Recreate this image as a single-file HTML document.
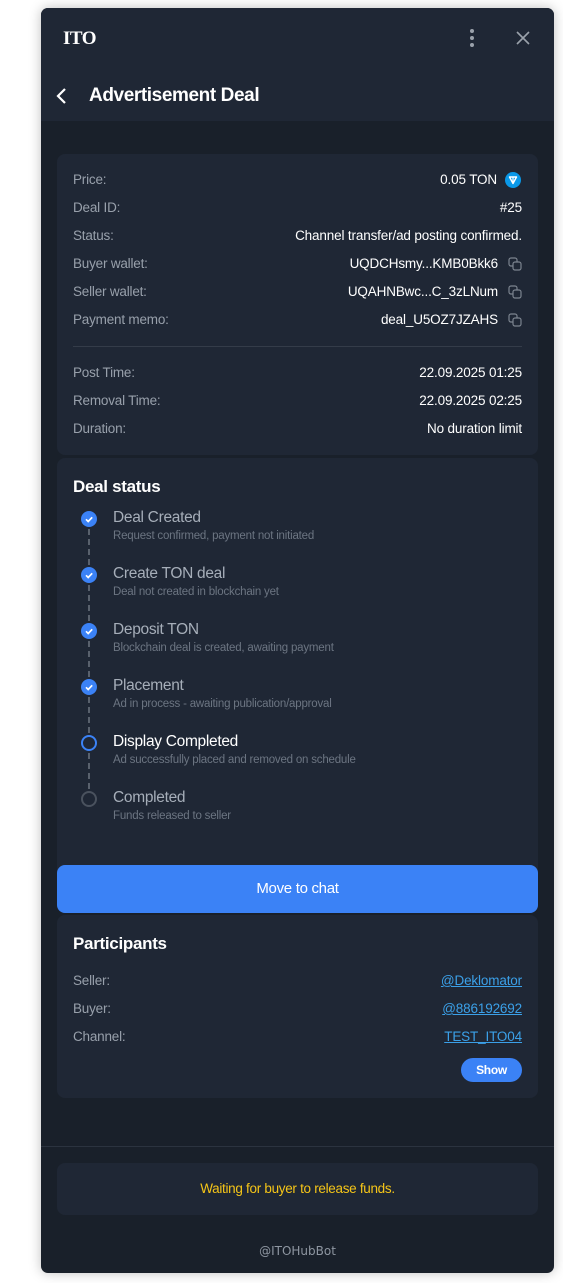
<!DOCTYPE html>
<html><head><meta charset="utf-8"><style>
*{box-sizing:border-box;margin:0;padding:0}
body{width:563px;height:1283px;background:#fff;font-family:"Liberation Sans",sans-serif;position:relative;overflow:hidden}
.win{position:absolute;left:41px;top:8px;width:513px;height:1265px;background:#19202a;border-radius:7px;overflow:hidden;box-shadow:0 0 12px rgba(0,0,0,.25)}
.hdr{position:absolute;left:0;top:0;width:513px;height:113px;background:#1f2735}
.a{position:absolute}
.card{position:absolute;left:16px;width:481px;background:#1f2735;border-radius:8px}
.lbl{position:absolute;left:16px;font-size:13.5px;color:#98a0ab;letter-spacing:-.2px}
.val{position:absolute;right:16px;font-size:13.5px;color:#fff;letter-spacing:-.15px;text-align:right}
.lnk{color:#3ba0e8;text-decoration:underline}
.dot{position:absolute;left:24px;width:16px;height:16px;border-radius:50%;background:#3b82f6}
.t{position:absolute;left:56px;font-size:15.5px;color:#a6aeb9;letter-spacing:-.3px}
.s{position:absolute;left:56px;font-size:11.5px;color:#6c7582;letter-spacing:-.2px}
.dash{position:absolute;left:31px;width:0;border-left:2px dashed #59616d;height:36px}
.cp{position:absolute;right:16px;width:14px;height:14px}
</style></head><body>
<div class="win">
<div class="hdr">
 <div class="a" style="left:22px;top:20px;font-family:'Liberation Serif',serif;font-size:19px;color:#fff;font-weight:bold;letter-spacing:-.5px">ITO</div>
 <svg class="a" style="left:424px;top:20px" width="14" height="20"><circle cx="7" cy="3" r="2" fill="#9aa1ab"/><circle cx="7" cy="10" r="2" fill="#9aa1ab"/><circle cx="7" cy="17" r="2" fill="#9aa1ab"/></svg>
 <svg class="a" style="left:475px;top:23px" width="14" height="14"><path d="M1 1L13 13M13 1L1 13" stroke="#9aa1ab" stroke-width="1.6"/></svg>
 <svg class="a" style="left:14px;top:79px" width="12" height="18"><path d="M10 2L3 9L10 16" stroke="#fff" stroke-width="2.2" fill="none"/></svg>
 <div class="a" style="left:48px;top:77px;font-size:19px;font-weight:bold;color:#fff;letter-spacing:-.4px">Advertisement Deal</div>
</div>

<div class="card" style="top:146px;height:301px">
 <div class="lbl" style="top:18px">Price:</div><div class="val" style="top:18px;right:41px">0.05 TON</div>
 <svg class="a" style="left:448px;top:18px" width="16" height="16"><circle cx="8" cy="8" r="8" fill="#0a98e8"/><path d="M4.5 5h7L8 11.5z" fill="none" stroke="#fff" stroke-width="1.4" stroke-linejoin="round"/><path d="M8 5v6.5" stroke="#fff" stroke-width="1.2"/></svg>
 <div class="lbl" style="top:46px">Deal ID:</div><div class="val" style="top:46px">#25</div>
 <div class="lbl" style="top:74px">Status:</div><div class="val" style="top:74px">Channel transfer/ad posting confirmed.</div>
 <div class="lbl" style="top:102px">Buyer wallet:</div><div class="val" style="top:102px;right:40px">UQDCHsmy...KMB0Bkk6</div>
 <div class="lbl" style="top:130px">Seller wallet:</div><div class="val" style="top:130px;right:40px">UQAHNBwc...C_3zLNum</div>
 <div class="lbl" style="top:158px">Payment memo:</div><div class="val" style="top:158px;right:40px">deal_U5OZ7JZAHS</div>
 <svg class="cp" style="top:103px" viewBox="0 0 14 14"><rect x="1" y="1" width="8" height="8" rx="2" fill="none" stroke="#7c848f" stroke-width="1.2"/><rect x="5" y="5" width="8" height="8" rx="2" fill="#1f2735" stroke="#7c848f" stroke-width="1.2"/></svg>
 <svg class="cp" style="top:131px" viewBox="0 0 14 14"><rect x="1" y="1" width="8" height="8" rx="2" fill="none" stroke="#7c848f" stroke-width="1.2"/><rect x="5" y="5" width="8" height="8" rx="2" fill="#1f2735" stroke="#7c848f" stroke-width="1.2"/></svg>
 <svg class="cp" style="top:159px" viewBox="0 0 14 14"><rect x="1" y="1" width="8" height="8" rx="2" fill="none" stroke="#7c848f" stroke-width="1.2"/><rect x="5" y="5" width="8" height="8" rx="2" fill="#1f2735" stroke="#7c848f" stroke-width="1.2"/></svg>
 <div class="a" style="left:16px;right:16px;top:192px;height:1px;background:#343c49"></div>
 <div class="lbl" style="top:211px">Post Time:</div><div class="val" style="top:211px">22.09.2025 01:25</div>
 <div class="lbl" style="top:239px">Removal Time:</div><div class="val" style="top:239px">22.09.2025 02:25</div>
 <div class="lbl" style="top:267px">Duration:</div><div class="val" style="top:267px">No duration limit</div>
</div>

<div class="card" style="top:450px;height:420px">
 <div class="a" style="left:16px;top:19px;font-size:17px;font-weight:bold;color:#fff;letter-spacing:-.3px">Deal status</div>
 <div class="dot" style="top:53px"></div><div class="dash" style="top:71px"></div>
 <div class="dot" style="top:109px"></div><div class="dash" style="top:127px"></div>
 <div class="dot" style="top:165px"></div><div class="dash" style="top:183px"></div>
 <div class="dot" style="top:221px"></div><div class="dash" style="top:239px"></div>
 <div class="dot" style="top:277px;background:none;border:2px solid #3b82f6"></div><div class="dash" style="top:295px"></div>
 <div class="dot" style="top:333px;background:none;border:2px solid #4a525e"></div>
 <svg class="a" style="left:24px;top:53px" width="16" height="240"><g fill="none" stroke="#fff" stroke-width="1.7"><path d="M5 8.3l2.2 2.2 4-4.2"/><path d="M5 64.3l2.2 2.2 4-4.2"/><path d="M5 120.3l2.2 2.2 4-4.2"/><path d="M5 176.3l2.2 2.2 4-4.2"/></g></svg>
 <div class="t" style="top:51px">Deal Created</div><div class="s" style="top:72px">Request confirmed, payment not initiated</div>
 <div class="t" style="top:107px">Create TON deal</div><div class="s" style="top:128px">Deal not created in blockchain yet</div>
 <div class="t" style="top:163px">Deposit TON</div><div class="s" style="top:184px">Blockchain deal is created, awaiting payment</div>
 <div class="t" style="top:219px">Placement</div><div class="s" style="top:240px">Ad in process - awaiting publication/approval</div>
 <div class="t" style="top:275px;color:#fff">Display Completed</div><div class="s" style="top:296px">Ad successfully placed and removed on schedule</div>
 <div class="t" style="top:331px">Completed</div><div class="s" style="top:352px">Funds released to seller</div>
</div>

<div class="a" style="left:16px;top:857px;width:481px;height:48px;background:#3b82f6;border-radius:8px;color:#fff;font-size:15px;text-align:center;line-height:48px;letter-spacing:-.3px">Move to chat</div>

<div class="card" style="top:907px;height:183px">
 <div class="a" style="left:16px;top:19px;font-size:17px;font-weight:bold;color:#fff;letter-spacing:-.3px">Participants</div>
 <div class="lbl" style="top:58px">Seller:</div><div class="val lnk" style="top:58px">@Deklomator</div>
 <div class="lbl" style="top:86px">Buyer:</div><div class="val lnk" style="top:86px">@886192692</div>
 <div class="lbl" style="top:114px">Channel:</div><div class="val lnk" style="top:114px">TEST_ITO04</div>
 <div class="a" style="right:16px;top:143px;width:61px;height:24px;border-radius:12px;background:#3b82f6;color:#fff;font-size:12px;font-weight:bold;text-align:center;line-height:24px;letter-spacing:-.3px">Show</div>
</div>

<div class="a" style="left:0;top:1138px;width:513px;height:1px;background:#2b333f"></div>
<div class="a" style="left:16px;top:1155px;width:481px;height:52px;background:#1f2735;border-radius:8px;color:#f5c518;font-size:13.5px;text-align:center;line-height:52px;letter-spacing:-.3px">Waiting for buyer to release funds.</div>
<div class="a" style="left:0;width:513px;top:1236px;text-align:center;font-family:'DejaVu Sans',sans-serif;font-size:12px;color:#8e96a1">@ITOHubBot</div>
</div>
</body></html>
